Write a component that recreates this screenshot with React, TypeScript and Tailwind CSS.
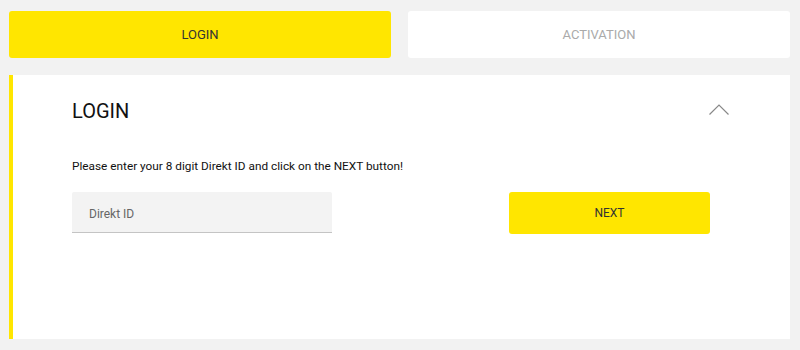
import React from "react";

export default function App() {
  return (
    <div
      className="w-[800px] h-[350px] bg-[#f2f2f2] pt-[11px] pl-[9px] pr-[10px] overflow-hidden"
      style={{ fontFamily: "Roboto, 'Liberation Sans', sans-serif" }}
    >
      {/* Tabs */}
      <div className="flex gap-[17px]">
        <button className="flex-1 h-[47px] rounded-[3px] bg-[#ffe600] text-[13px] text-[#333333] uppercase">
          LOGIN
        </button>
        <button className="flex-1 h-[47px] rounded-[3px] bg-white text-[13px] text-[#aaaaaa] uppercase">
          ACTIVATION
        </button>
      </div>

      {/* Login panel */}
      <div className="mt-[17px] h-[264px] bg-white border-l-4 border-[#ffe600] pl-[59px] pr-[80px] pt-[22px]">
        <div className="flex items-center justify-between h-[28px]">
          <h2 className="text-[20px] leading-[28px] text-[#111111]">LOGIN</h2>
          <svg
            className="-mr-[19px] mt-[-4px]"
            width="20"
            height="11"
            viewBox="0 0 20 11"
            fill="none"
          >
            <path d="M0.5 10.5 L10 1 L19.5 10.5" stroke="#888888" strokeWidth="1.2" />
          </svg>
        </div>

        <p className="mt-[32px] text-[11.8px] leading-[18px] text-[#111111]">
          Please enter your 8 digit Direkt ID and click on the NEXT button!
        </p>

        <div className="mt-[17px] flex justify-between items-start">
          <input
            type="text"
            placeholder="Direkt ID"
            className="w-[260px] h-[41px] bg-[#f3f3f3] border-b border-[#c4c4c4] px-[17px] pt-[4px] text-[12px] text-[#333333] placeholder:text-[#666666] outline-none rounded-t-[2px]"
          />
          <button className="w-[201px] h-[42px] rounded-[3px] bg-[#ffe600] text-[12px] text-[#333333]">
            NEXT
          </button>
        </div>
      </div>
    </div>
  );
}
